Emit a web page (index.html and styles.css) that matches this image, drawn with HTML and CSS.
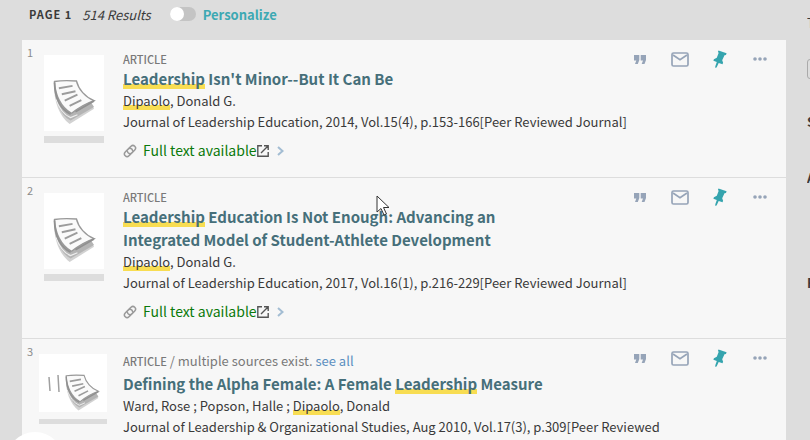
FILE: index.html
```html
<!DOCTYPE html>
<html lang="en">
<head>
<meta charset="utf-8">
<title>Search results</title>
<link rel="stylesheet" href="styles.css">
</head>
<body>
<svg class="sprite" aria-hidden="true">
  <symbol id="quote" viewBox="0 0 12 9"><path d="M0 0h5.300v5L3.800 9H1l1.300-3.500H0zM6.700 0H12v5l-1.500 4H7.700L9 5.500H6.700z"/></symbol>
  <symbol id="mail" viewBox="0 0 18 15"><rect x="1" y="1" width="16" height="13" rx="1.500" fill="none" stroke="currentColor" stroke-width="1.700"/><path d="M2 3l7 4.700L16 3" fill="none" stroke="currentColor" stroke-width="1.700"/></symbol>
  <symbol id="pin" viewBox="0 0 14 18"><path d="M5.500.4l8.100 2.900-.6 1.800-1.500.1-2.300 5 .9 2.500-.6 1.600-3.800-1.300-2.100 4.600-1.500.1.300-1.600 1.400-4L.4 10.700l.5-1.400L3.800 7.800l1.900-5L4.900 2z"/></symbol>
  <symbol id="dots" viewBox="0 0 14 4"><circle cx="2" cy="2" r="1.800"/><circle cx="7" cy="2" r="1.800"/><circle cx="12" cy="2" r="1.800"/></symbol>
  <symbol id="chain" viewBox="0 0 24 24"><g fill="none" stroke="currentColor" stroke-width="2.600" stroke-linecap="round" transform="rotate(-45 12 12)"><path d="M9 16.500H5a4.500 4.500 0 0 1 0-9h7a4.500 4.500 0 0 1 3.500 7.300"/><path d="M15 7.500h4a4.500 4.500 0 0 1 0 9h-7a4.500 4.500 0 0 1-3.500-7.300"/></g></symbol>
  <symbol id="external" viewBox="0 0 12 12"><path d="M5 .8H.8v10.400h10.400V7M7 .8h4.200V5M11 1L4 8" fill="none" stroke="currentColor" stroke-width="1.400"/></symbol>
  <symbol id="chevron" viewBox="0 0 7 10"><path d="M1 1l4.500 4L1 9" fill="none" stroke="currentColor" stroke-width="2"/></symbol>
  <symbol id="papers" viewBox="0 0 44 46">
    <path d="M1 5C1 22 6 37 17 45.500L42 30l-3-5z" fill="#d2d2d2"/>
    <path d="M1 6c1 16 6 30 17 36l24-14-4-6z" fill="#b4b4b4"/>
    <path d="M3 20c3 9 8 16 15 19l7-3" fill="none" stroke="#eee" stroke-width="1.200"/>
    <path d="M1.500 2C9 .8 17 1 24 1.500 26 10 33 18 42 21.500 35 24 27 28 19 34.500 8 29 2 15 1.500 2z" fill="#fafafa" stroke="#999" stroke-width="1.400"/>
    <path d="M1.500 3C2 18 7 30 18 35.500M23 33l19-11" fill="none" stroke="#909090" stroke-width="1.800"/>
    <path d="M6 9l14-2.500M9 15l14-3M12 21.500l13-6M17 27l12-6" fill="none" stroke="#9c9c9c" stroke-width="2"/>
  </symbol>
</svg>

<div class="page">
  <main class="results">
    <header class="toolbar">
      <h1 class="page-number">PAGE 1</h1>
      <span class="count">514 Results</span>
      <label class="personalize"><input class="toggle" type="checkbox" role="switch">Personalize</label>
    </header>

    <ol class="list">
      <li class="item">
        <span class="index">1</span>
        <div class="thumb"><svg class="papers"><use href="#papers"/></svg></div>
        <div class="body">
          <div class="head">
            <div class="heading">
              <p class="type"><span class="kind">ARTICLE</span></p>
              <h2 class="title"><a href="#"><mark>Leadership</mark> Isn't Minor--But It Can Be</a></h2>
            </div>
            <div class="actions">
              <button aria-label="Citation"><svg class="i-quote"><use href="#quote"/></svg></button>
              <button aria-label="Email"><svg class="i-mail"><use href="#mail"/></svg></button>
              <button class="pinned" aria-label="Pin"><svg class="i-pin"><use href="#pin"/></svg></button>
              <button aria-label="More"><svg class="i-dots"><use href="#dots"/></svg></button>
            </div>
          </div>
          <p class="line"><mark>Dipaolo</mark>, Donald G.</p>
          <p class="line">Journal of Leadership Education, 2014, Vol.15(4), p.153-166[Peer Reviewed Journal]</p>
          <a class="access" href="#"><svg class="i-chain"><use href="#chain"/></svg>Full text available<svg class="i-external"><use href="#external"/></svg><svg class="i-chevron"><use href="#chevron"/></svg></a>
        </div>
      </li>

      <li class="item">
        <span class="index">2</span>
        <div class="thumb"><svg class="papers"><use href="#papers"/></svg></div>
        <div class="body">
          <div class="head">
            <div class="heading">
              <p class="type"><span class="kind">ARTICLE</span></p>
              <h2 class="title"><a href="#"><mark>Leadership</mark> Education Is Not Enough: Advancing an Integrated Model of Student-Athlete Development</a></h2>
            </div>
            <div class="actions">
              <button aria-label="Citation"><svg class="i-quote"><use href="#quote"/></svg></button>
              <button aria-label="Email"><svg class="i-mail"><use href="#mail"/></svg></button>
              <button class="pinned" aria-label="Pin"><svg class="i-pin"><use href="#pin"/></svg></button>
              <button aria-label="More"><svg class="i-dots"><use href="#dots"/></svg></button>
            </div>
          </div>
          <p class="line"><mark>Dipaolo</mark>, Donald G.</p>
          <p class="line">Journal of Leadership Education, 2017, Vol.16(1), p.216-229[Peer Reviewed Journal]</p>
          <a class="access" href="#"><svg class="i-chain"><use href="#chain"/></svg>Full text available<svg class="i-external"><use href="#external"/></svg><svg class="i-chevron"><use href="#chevron"/></svg></a>
        </div>
      </li>

      <li class="item">
        <span class="index">3</span>
        <div class="thumb stack"><svg class="edges" viewBox="0 0 14 20"><path d="M2 3l1 14M11 1l1 17" fill="none" stroke="#a0a0a0" stroke-width="1.500"/></svg><svg class="papers"><use href="#papers"/></svg></div>
        <div class="body">
          <div class="head">
            <div class="heading">
              <p class="type sources"><span class="kind">ARTICLE</span> / multiple sources exist. <a href="#">see all</a></p>
              <h2 class="title"><a href="#">Defining the Alpha Female: A Female <mark>Leadership</mark> Measure</a></h2>
            </div>
            <div class="actions">
              <button aria-label="Citation"><svg class="i-quote"><use href="#quote"/></svg></button>
              <button aria-label="Email"><svg class="i-mail"><use href="#mail"/></svg></button>
              <button class="pinned" aria-label="Pin"><svg class="i-pin"><use href="#pin"/></svg></button>
              <button aria-label="More"><svg class="i-dots"><use href="#dots"/></svg></button>
            </div>
          </div>
          <p class="line">Ward, Rose ; Popson, Halle ; <mark>Dipaolo</mark>, Donald</p>
          <p class="line">Journal of Leadership &amp; Organizational Studies, Aug 2010, Vol.17(3), p.309[Peer Reviewed</p>
        </div>
      </li>
    </ol>
  </main>

  <aside class="filters">
    <p class="filter-title">T</p>
    <div class="filter-box"></div>
    <p class="filter-name">S</p>
    <p class="filter-name">A</p>
    <p class="filter-name last">R</p>
  </aside>
</div>

<div class="bubble"></div>
<svg class="cursor" viewBox="0 0 14 21"><path d="M1 1v16l4-3.500 3 6.500 2.500-1-3-6.500H13z" fill="#fff" stroke="#333"/></svg>
</body>
</html>
```
FILE: styles.css
```css
* { box-sizing: border-box; }
body {
  margin: 0;
  height: 100vh;
  overflow: hidden;
  background: #ddd;
  color: #3a3a3a;
  font: 13px/21px "Noto Sans CJK SC", "Open Sans", sans-serif;
}
h1, h2, p, ol { margin: 0; padding: 0; }
a { color: inherit; text-decoration: none; }
svg { display: block; flex: none; fill: currentColor; }
.sprite { position: absolute; width: 0; height: 0; }

.page { display: flex; height: 100%; padding-left: 22px; }
.results { flex: 1; display: flex; flex-direction: column; min-width: 0; }

.toolbar { flex: none; display: flex; align-items: center; height: 40px; padding: 0 0 12px 7px; }
.page-number { font-size: 11px; font-weight: 700; letter-spacing: 1px; }
.count { margin-left: 10px; font-style: italic; }
.personalize { display: flex; align-items: center; gap: 7px; margin-left: 19px; color: #3da9b3; font-weight: 700; }
.toggle {
  appearance: none;
  width: 26px;
  height: 14px;
  margin: 0;
  border-radius: 7px;
  background: #c4c4c4;
}
.toggle::before { content: ""; display: block; width: 14px; height: 14px; border-radius: 50%; background: #fff; }

.list { flex: 1; min-height: 0; overflow: hidden; list-style: none; background: #f7f7f7; }
.item { display: flex; padding: 11px 0 16px; border-bottom: 1px solid #ddd; }
.item:last-child { border-bottom: 0; padding-bottom: 0; }
.index { flex: none; width: 22px; margin-top: -4px; padding-left: 5px; font-size: 11px; color: #8c8c8c; line-height: 11px; }
.thumb {
  flex: none;
  align-self: flex-start;
  width: 60px;
  height: 88px;
  margin: 4px 19px 0 0;
  padding: 24px 0 0 9px;
  border-bottom: 7px solid #ddd;
  background: linear-gradient(#fff, #fff) 0 0 / 100% 76px no-repeat;
}
.papers { width: 43px; height: 46px; }
.stack { display: flex; width: 68px; height: 70px; margin: 4px 16px 0 -5px; padding: 20px 0 0 8px; border-bottom-width: 5px; background-size: 100% 58px; }
.stack .papers { width: 35px; height: 37px; margin-left: 4px; }
.edges { width: 14px; height: 20px; }

.body { flex: 1; min-width: 0; }
.head { display: flex; justify-content: space-between; }
.heading { width: 450px; }
.type { line-height: 16px; color: #797979; }
.sources { line-height: 21px; }
.sources a { color: #5b8fc0; }
.kind { font-size: 11px; font-weight: 500; }
.title { font-size: 15px; line-height: 23px; font-weight: 700; color: #466f7a; }
mark {
  color: inherit;
  background: linear-gradient(#f8dd52, #f8dd52) 0 100% / 100% 5px no-repeat;
}
.actions { display: flex; align-self: flex-start; margin-right: 6px; color: #96a4b8; }
.actions button {
  display: flex;
  align-items: center;
  justify-content: center;
  width: 40px;
  height: 16px;
  padding: 0;
  border: 0;
  background: none;
  color: inherit;
}
.actions .pinned { color: #35a4ae; }
.i-quote { width: 12px; height: 9px; }
.i-mail { width: 18px; height: 15px; }
.i-pin { width: 14px; height: 18px; }
.i-dots { width: 14px; height: 4px; }

.access { display: flex; align-items: center; margin-top: 8px; font-size: 14px; color: #0b7a0b; }
.i-chain { width: 14px; height: 14px; margin-right: 6px; color: #999; }
.i-external { width: 12px; height: 12px; color: #555; }
.i-chevron { width: 7px; height: 10px; margin-left: 8px; color: #a3bdd3; }

.filters { flex: none; width: 3px; margin-left: 21px; overflow: hidden; font-weight: 700; }
.filter-title { height: 59px; padding-top: 12px; font-weight: 400; }
.filter-box { width: 60px; height: 20px; margin-bottom: 32px; border: 1px solid #aaa; border-radius: 3px; }
.filter-name { height: 56px; }
.last { margin-top: 49px; }

.bubble { position: absolute; left: 6px; bottom: -50px; width: 58px; height: 58px; border-radius: 50%; background: #fff; }
.cursor { position: absolute; left: 376px; top: 195px; width: 14px; height: 21px; }
```
